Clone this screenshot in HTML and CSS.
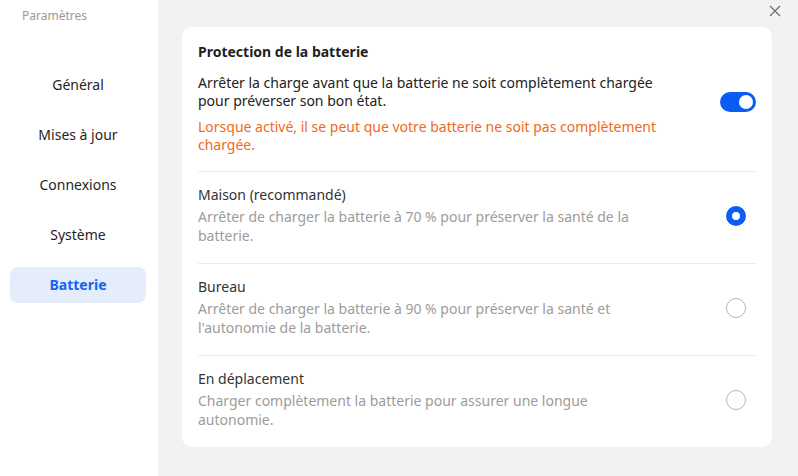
FILE: index.html
```html
<!DOCTYPE html>
<html lang="fr">
<head>
    <meta charset="UTF-8">
    <title>Paramètres</title>
    <link rel="stylesheet" href="styles.css">
</head>
<body>
    <div class="window">
        <aside class="sidebar">
            <div class="app-title">Paramètres</div>
            <nav class="nav">
                <a class="nav-item">Général</a>
                <a class="nav-item">Mises à jour</a>
                <a class="nav-item">Connexions</a>
                <a class="nav-item">Système</a>
                <a class="nav-item active">Batterie</a>
            </nav>
        </aside>
        <main class="content">
            <div class="topbar">
                <button class="close" aria-label="Fermer">
                    <svg width="12" height="12" viewBox="0 0 12 12"><path d="M1 1L11 11M11 1L1 11" stroke="#6f6f6f" stroke-width="1.3" fill="none"/></svg>
                </button>
            </div>
            <section class="card">
                <div class="card-head">
                    <h3>Protection de la batterie</h3>
                    <div class="row">
                        <div class="text">
                            <p class="desc">Arrêter la charge avant que la batterie ne soit complètement chargée pour préverser son bon état.</p>
                            <p class="warn">Lorsque activé, il se peut que votre batterie ne soit pas complètement chargée.</p>
                        </div>
                        <span class="toggle on"><span class="knob"></span></span>
                    </div>
                </div>
                <div class="option">
                    <div class="text">
                        <div class="opt-title">Maison (recommandé)</div>
                        <div class="opt-desc">Arrêter de charger la batterie à 70 % pour préserver la santé de la batterie.</div>
                    </div>
                    <span class="radio checked"></span>
                </div>
                <div class="option">
                    <div class="text">
                        <div class="opt-title">Bureau</div>
                        <div class="opt-desc">Arrêter de charger la batterie à 90 % pour préserver la santé et l'autonomie de la batterie.</div>
                    </div>
                    <span class="radio"></span>
                </div>
                <div class="option">
                    <div class="text">
                        <div class="opt-title">En déplacement</div>
                        <div class="opt-desc">Charger complètement la batterie pour assurer une longue autonomie.</div>
                    </div>
                    <span class="radio"></span>
                </div>
            </section>
        </main>
    </div>
</body>
</html>
```

FILE: styles.css
```css
* {
    box-sizing: border-box;
}
body {
    margin: 0;
    font-family: "Noto Sans", Arial, sans-serif;
    color: #1f1f1f;
    background: #f1f2f4;
}
.window {
    display: flex;
    width: 798px;
    height: 476px;
}
.sidebar {
    width: 158px;
    background: #fff;
    padding: 8px 12px 0 10px;
}
.app-title {
    font-size: 12px;
    color: #9a9a9a;
    padding-left: 12px;
    line-height: 16px;
}
.nav {
    display: flex;
    flex-direction: column;
    gap: 14px;
    margin-top: 43px;
}
.nav-item {
    display: block;
    height: 36px;
    line-height: 36px;
    text-align: center;
    font-size: 14px;
    color: #1f1f1f;
    border-radius: 8px;
}
.nav-item.active {
    background: #e5edfc;
    color: #1264f5;
    font-weight: bold;
}
.content {
    flex: 1;
    padding: 0 26px 0 24px;
}
.topbar {
    height: 27px;
    display: flex;
    justify-content: flex-end;
    margin-right: -26px;
}
.close {
    border: none;
    background: none;
    padding: 4px 17px 0 0;
    height: 20px;
    cursor: pointer;
}
.card {
    background: #fff;
    border-radius: 10px;
    padding: 0 16px;
}
.card-head {
    padding: 16px 0 17px;
    border-bottom: 1px solid #ececec;
}
.card-head h3 {
    margin: 0;
    font-size: 14px;
    line-height: 18px;
    font-weight: bold;
}
.row, .option {
    display: flex;
    align-items: center;
    justify-content: space-between;
}
.text {
    width: 480px;
}
.option .text {
    width: 460px;
}
.desc {
    margin: 13px 0 0;
    font-size: 14px;
    line-height: 18px;
    color: #222;
}
.warn {
    margin: 8px 0 0;
    font-size: 14px;
    line-height: 18px;
    color: #f06a1d;
}
.toggle {
    width: 36px;
    height: 20px;
    border-radius: 10px;
    background: #0b5cf5;
    position: relative;
    margin-top: -12px;
}
.toggle .knob {
    position: absolute;
    top: 3px;
    right: 3px;
    width: 14px;
    height: 14px;
    border-radius: 50%;
    background: #fff;
}
.option {
    padding: 13px 0 18px;
    border-bottom: 1px solid #ececec;
}
.option:last-child {
    border-bottom: none;
}
.opt-title {
    font-size: 14px;
    line-height: 20px;
    color: #333;
}
.opt-desc {
    margin-top: 2px;
    font-size: 14px;
    line-height: 19px;
    color: #9c9c9c;
}
.radio {
    width: 20px;
    height: 20px;
    border-radius: 50%;
    border: 1px solid #b4b4b4;
    margin-right: 10px;
    margin-top: 1px;
}
.radio.checked {
    border: 6px solid #0b5cf5;
}
```
